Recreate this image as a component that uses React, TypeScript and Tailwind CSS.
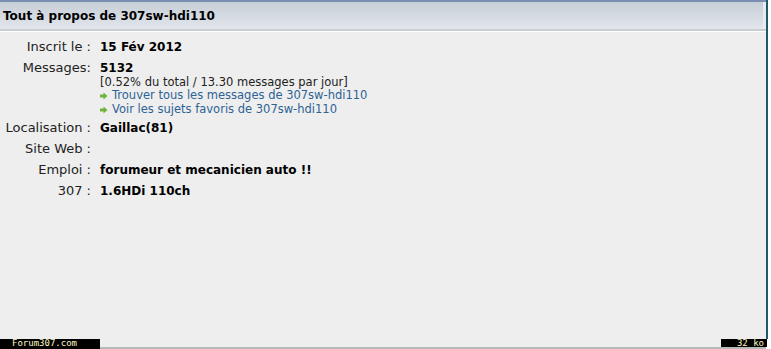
const Arrow = () => (
  <svg width="8" height="8" viewBox="0 0 8 8" className="mr-[4px] shrink-0">
    <path d="M0 2.5h3.5V0.5L7.5 4L3.5 7.5V5.5H0z" fill="#6fb33a" />
  </svg>
);

const Row = ({ label, children }: { label: string; children?: React.ReactNode }) => (
  <div className="flex h-[21px] items-center">
    <div className="w-[92px] shrink-0 text-right pr-[1px] text-[13px] text-[#222]">{label}</div>
    <div className="pl-[8px] text-[12px] font-bold text-black">{children}</div>
  </div>
);

const App = () => {
  return (
    <div className="w-[771px] h-[349px] bg-white flex overflow-hidden" style={{ fontFamily: 'Verdana, "DejaVu Sans", sans-serif' }}>
      <div className="w-[766px] flex flex-col bg-[#eeeeee]">
        {/* Header */}
        <div className="h-[2px] bg-[#7b8fb3]" />
        <div className="h-[27px] flex items-center px-[3px] bg-gradient-to-b from-[#c7ced6] to-[#e1e6ec] border-r-[3px] border-[#e8eaee]">
          <span className="text-[12px] font-bold text-black">Tout à propos de 307sw-hdi110</span>
        </div>
        <div className="h-[2px] bg-[#c8cdd2]" />
        <div className="h-[1px] bg-white" />

        {/* Body */}
        <div className="flex-1 pt-[4px]">
          <Row label="Inscrit le :">15 Fév 2012</Row>
          <div className="flex">
            <div className="w-[92px] shrink-0 text-right pr-[1px] text-[13px] leading-[21px] text-[#222]">Messages:</div>
            <div className="pl-[8px]">
              <div className="h-[19px] pt-[2px] flex items-center text-[12px] font-bold text-black">5132</div>
              <div className="h-[13px] flex items-center text-[11.5px] text-[#222]">[0.52% du total / 13.30 messages par jour]</div>
              <div className="h-[14px] flex items-center text-[11.5px] text-[#2d6394]">
                <Arrow />
                Trouver tous les messages de 307sw-hdi110
              </div>
              <div className="h-[13px] flex items-center text-[11.5px] text-[#2d6394]">
                <Arrow />
                Voir les sujets favoris de 307sw-hdi110
              </div>
            </div>
          </div>
          <div className="h-[1px]" />
          <Row label="Localisation :">Gaillac(81)</Row>
          <Row label="Site Web :" />
          <Row label="Emploi :">forumeur et mecanicien auto !!</Row>
          <Row label="307 :">1.6HDi 110ch</Row>
        </div>

        {/* Footer */}
        <div className="h-[8px] flex justify-between">
          <div className="w-[100px] bg-black flex items-center pl-[12px] text-[9px] leading-[8px] text-[#fff8c0]" style={{ fontFamily: '"DejaVu Sans Mono", monospace' }}>
            Forum307.com
          </div>
          <div className="w-[46px] mr-[-1px] bg-black flex items-center justify-end pr-[3px] text-[9px] leading-[8px] text-[#fff8c0]" style={{ fontFamily: '"DejaVu Sans Mono", monospace' }}>
            32 ko
          </div>
        </div>
        <div className="h-[2px] flex">
          <div className="w-[100px] bg-black" />
          <div className="flex-1 bg-[#b8b8b8]" />
        </div>
      </div>
      <div className="w-[2px] h-[339px] bg-[#1f5a68]" />
    </div>
  );
};

export default App;
